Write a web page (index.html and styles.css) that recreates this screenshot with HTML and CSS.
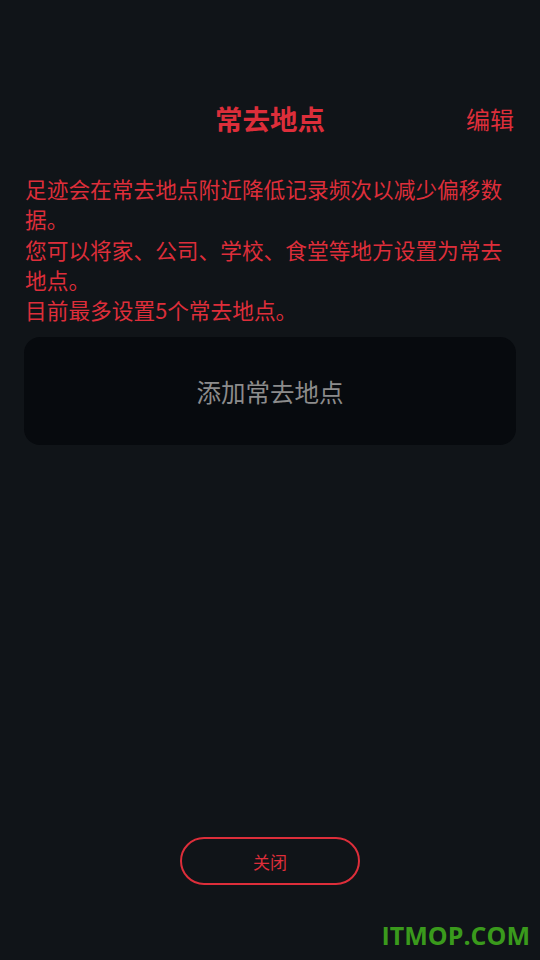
FILE: index.html
```html
<!DOCTYPE html>
<html lang="zh">
<head>
    <meta charset="UTF-8">
    <title>常去地点</title>
    <link rel="stylesheet" href="styles.css">
</head>
<body>
<div class="page">
    <div class="header">
        <h1>常去地点</h1>
        <a href="#" class="edit">编辑</a>
    </div>
    <div class="desc">
        足迹会在常去地点附近降低记录频次以减少偏移数据。<br>
        您可以将家、公司、学校、食堂等地方设置为常去地点。<br>
        目前最多设置5个常去地点。
    </div>
    <div class="add-card">添加常去地点</div>
    <div class="spacer"></div>
    <div class="footer">
        <button class="close-btn">关闭</button>
    </div>
    <div class="watermark">ITMOP.COM</div>
</div>
</body>
</html>
```
FILE: styles.css
```css
body {
    margin: 0;
    background-color: #101418;
    font-family: "Noto Sans CJK SC", "Noto Sans", sans-serif;
    color: #dd2e3a;
}
.page {
    height: 960px;
    display: flex;
    flex-direction: column;
    padding: 0 24px;
    box-sizing: border-box;
    position: relative;
}
.header {
    height: 60px;
    margin-top: 88px;
    display: flex;
    align-items: center;
    justify-content: center;
    position: relative;
}
.header h1 {
    margin: 0;
    font-size: 27.5px;
    font-weight: bold;
    color: #dd2e3a;
}
.edit {
    position: absolute;
    right: 2px;
    top: 50%;
    transform: translateY(-50%);
    font-size: 24px;
    color: #dd2e3a;
    text-decoration: none;
}
.desc {
    margin-top: 26px;
    font-size: 21.7px;
    line-height: 30.3px;
    padding-left: 1px;
}
.add-card {
    margin-top: 12px;
    height: 108px;
    border-radius: 16px;
    background-color: #070a0e;
    color: #8c8c8c;
    font-size: 24.5px;
    display: flex;
    align-items: center;
    justify-content: center;
}
.spacer {
    flex: 1;
}
.footer {
    display: flex;
    justify-content: center;
    margin-bottom: 75px;
}
.close-btn {
    width: 180px;
    height: 48px;
    border: 2px solid #dd2e3a;
    border-radius: 24px;
    background: transparent;
    color: #dd2e3a;
    font-family: inherit;
    font-size: 17px;
    cursor: pointer;
}
.watermark {
    position: absolute;
    right: 10px;
    bottom: 8px;
    font-family: "Open Sans", sans-serif;
    font-weight: bold;
    font-size: 25px;
    color: #3a9a1c;
}
```
